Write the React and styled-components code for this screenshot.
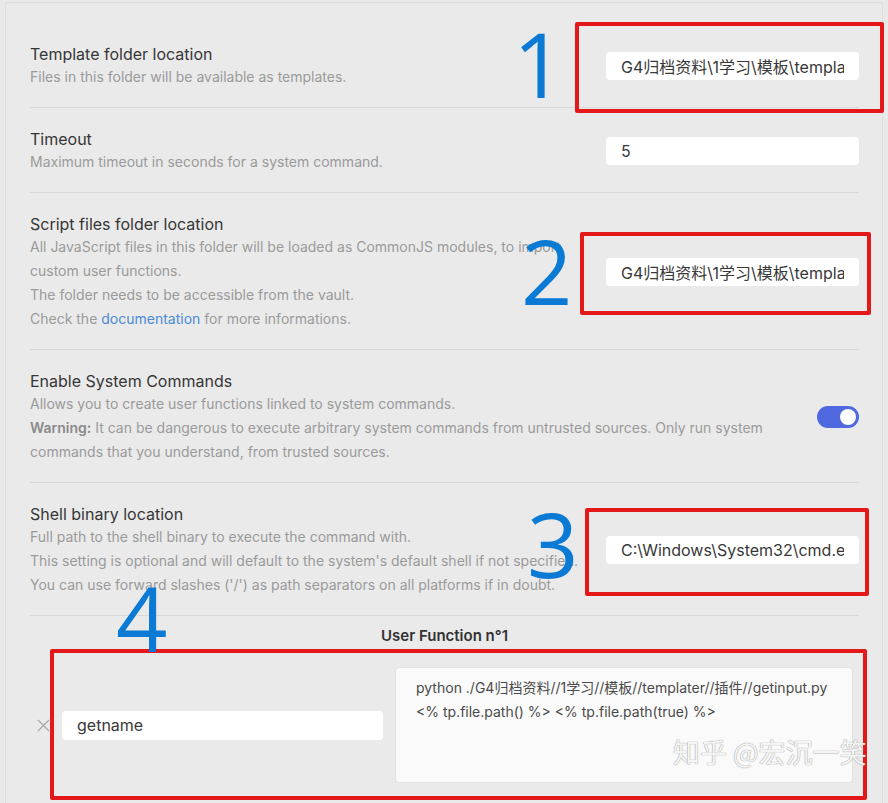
import React from "react";
import styled, { createGlobalStyle } from "styled-components";

const GlobalStyle = createGlobalStyle`
  html, body {
    margin: 0;
    padding: 0;
    background: #eaeaea;
  }
  body {
    font-family: Inter, "Noto Sans", "Noto Sans CJK SC", sans-serif;
    overflow: hidden;
  }
`;

const Page = styled.div`
  position: relative;
  width: 888px;
  height: 803px;
  overflow: hidden;
  background: #eaeaea;
`;

const Panel = styled.div`
  margin: 2px 0 0 5px;
  width: 878px;
  min-height: 801px;
  box-sizing: border-box;
  border: 1px solid #dedede;
  border-bottom: none;
  padding: 20px 23px 0 24px;
`;

const SettingItem = styled.div`
  display: flex;
  align-items: center;
  justify-content: space-between;
  gap: 20px;
  padding: 20px 0 18px;
  border-bottom: 1px solid #d9d9d9;
`;

const Info = styled.div`
  flex: 1;
  min-width: 0;
`;

const Name = styled.div`
  font-size: 16px;
  line-height: 22px;
  color: #363636;
`;

const Description = styled.div`
  font-size: 14px;
  line-height: 24px;
  color: #9a9a9a;
`;

const DescLine = styled.div``;

const LinkText = styled.span`
  color: #4a8ad6;
`;

const Strong = styled.span`
  font-weight: 600;
  color: #8a8a8a;
`;

const Control = styled.div`
  flex: none;
  display: flex;
  justify-content: flex-end;
`;

const TextInput = styled.input`
  width: 253px;
  height: 28px;
  box-sizing: border-box;
  border: none;
  border-radius: 4px;
  background: #ffffff;
  padding: 0 15px;
  font-family: Inter, "Noto Sans CJK SC", sans-serif;
  font-size: 16px;
  color: #383838;
  outline: none;
`;

const Toggle = styled.div`
  width: 42px;
  height: 22px;
  border-radius: 11px;
  background: ${(p) => (p.$on ? "#4f68e0" : "#c8c8c8")};
  display: flex;
  align-items: center;
  justify-content: ${(p) => (p.$on ? "flex-end" : "flex-start")};
  padding: 0 3px;
  box-sizing: border-box;
`;

const Knob = styled.div`
  width: 16px;
  height: 16px;
  border-radius: 50%;
  background: #ffffff;
`;

const FunctionHeading = styled.div`
  margin-top: 9px;
  text-align: center;
  font-size: 15px;
  line-height: 22px;
  font-weight: 600;
  color: #333333;
`;

const FunctionRow = styled.div`
  display: flex;
  align-items: center;
  margin-top: 20px;
  padding-left: 7px;
`;

const DeleteButton = styled.div`
  width: 13px;
  height: 13px;
  display: flex;
  margin-right: 12px;
`;

const NameInput = styled(TextInput)`
  width: 321px;
  height: 29px;
  font-size: 16px;
`;

const CommandArea = styled.textarea`
  margin-left: 12px;
  width: 458px;
  height: 116px;
  box-sizing: border-box;
  resize: none;
  border: 1px solid #e2e2e2;
  border-radius: 4px;
  background: #fafafa;
  padding: 8px 20px;
  font-family: Inter, "Noto Sans CJK SC", sans-serif;
  font-size: 14px;
  line-height: 24px;
  color: #4a4a4a;
  outline: none;
  overflow: hidden;
`;

const RedBox = styled.div`
  position: absolute;
  box-sizing: border-box;
  border: 4px solid #e41818;
  border-radius: 2px;
  pointer-events: none;
`;

const Marker = styled.div`
  position: absolute;
  font-family: "Open Sans", "Noto Sans", sans-serif;
  font-size: 90px;
  line-height: 1;
  color: #0a7ad4;
  pointer-events: none;
`;

const Watermark = styled.div`
  position: absolute;
  left: 673px;
  top: 738px;
  font-family: "Noto Sans CJK SC", sans-serif;
  font-size: 27px;
  line-height: 1;
  color: #f4f4f4;
  text-shadow: 0 0 1px #a0a0a0, 0 0 1px #a0a0a0;
  white-space: nowrap;
  pointer-events: none;
`;

const settings = [
  {
    name: "Template folder location",
    desc: ["Files in this folder will be available as templates."],
    value: "G4归档资料\\1学习\\模板\\templater",
  },
  {
    name: "Timeout",
    desc: ["Maximum timeout in seconds for a system command."],
    value: "5",
  },
  {
    name: "Script files folder location",
    desc: [
      "All JavaScript files in this folder will be loaded as CommonJS modules, to import",
      "custom user functions.",
      "The folder needs to be accessible from the vault.",
      <>
        Check the <LinkText>documentation</LinkText> for more informations.
      </>,
    ],
    value: "G4归档资料\\1学习\\模板\\templater",
  },
  {
    name: "Enable System Commands",
    desc: [
      "Allows you to create user functions linked to system commands.",
      <>
        <Strong>Warning:</Strong> It can be dangerous to execute arbitrary system
        commands from untrusted sources. Only run system commands that you
        understand, from trusted sources.
      </>,
    ],
    toggle: true,
  },
  {
    name: "Shell binary location",
    desc: [
      "Full path to the shell binary to execute the command with.",
      "This setting is optional and will default to the system's default shell if not specified.",
      "You can use forward slashes ('/') as path separators on all platforms if in doubt.",
    ],
    value: "C:\\Windows\\System32\\cmd.exe",
  },
];

// red boxes and blue numbers drawn over the screenshot
const marks = [
  { left: 575, top: 22, width: 309, height: 91 },
  { left: 580, top: 232, width: 291, height: 83 },
  { left: 585, top: 508, width: 284, height: 88 },
  { left: 50, top: 649, width: 817, height: 151 },
];

const numbers = [
  { n: "1", left: 513, top: 18 },
  { n: "2", left: 521, top: 225 },
  { n: "3", left: 527, top: 498 },
  { n: "4", left: 116, top: 572 },
];

const App = () => {
  return (
    <Page>
      <GlobalStyle />
      <Panel>
        {settings.map((s) => (
          <SettingItem key={s.name}>
            <Info>
              <Name>{s.name}</Name>
              <Description>
                {s.desc.map((d, i) => (
                  <DescLine key={i}>{d}</DescLine>
                ))}
              </Description>
            </Info>
            <Control>
              {s.toggle ? (
                <Toggle $on>
                  <Knob />
                </Toggle>
              ) : (
                <TextInput type="text" readOnly value={s.value} />
              )}
            </Control>
          </SettingItem>
        ))}

        <FunctionHeading>User Function n°1</FunctionHeading>
        <FunctionRow>
          <DeleteButton aria-label="delete">
            <svg width="13" height="13" viewBox="0 0 13 13">
              <path
                d="M1 1 L12 12 M12 1 L1 12"
                stroke="#a8a8a8"
                strokeWidth="1.2"
                fill="none"
              />
            </svg>
          </DeleteButton>
          <NameInput type="text" readOnly value="getname" />
          <CommandArea
            readOnly
            value={
              "python ./G4归档资料//1学习//模板//templater//插件//getinput.py\n<% tp.file.path() %> <% tp.file.path(true) %>"
            }
          />
        </FunctionRow>
      </Panel>

      {marks.map((m, i) => (
        <RedBox
          key={i}
          style={{ left: m.left, top: m.top, width: m.width, height: m.height }}
        />
      ))}
      {numbers.map((n) => (
        <Marker key={n.n} style={{ left: n.left, top: n.top }}>
          {n.n}
        </Marker>
      ))}
      <Watermark>知乎 @宏沉一笑</Watermark>
    </Page>
  );
};

export default App;
